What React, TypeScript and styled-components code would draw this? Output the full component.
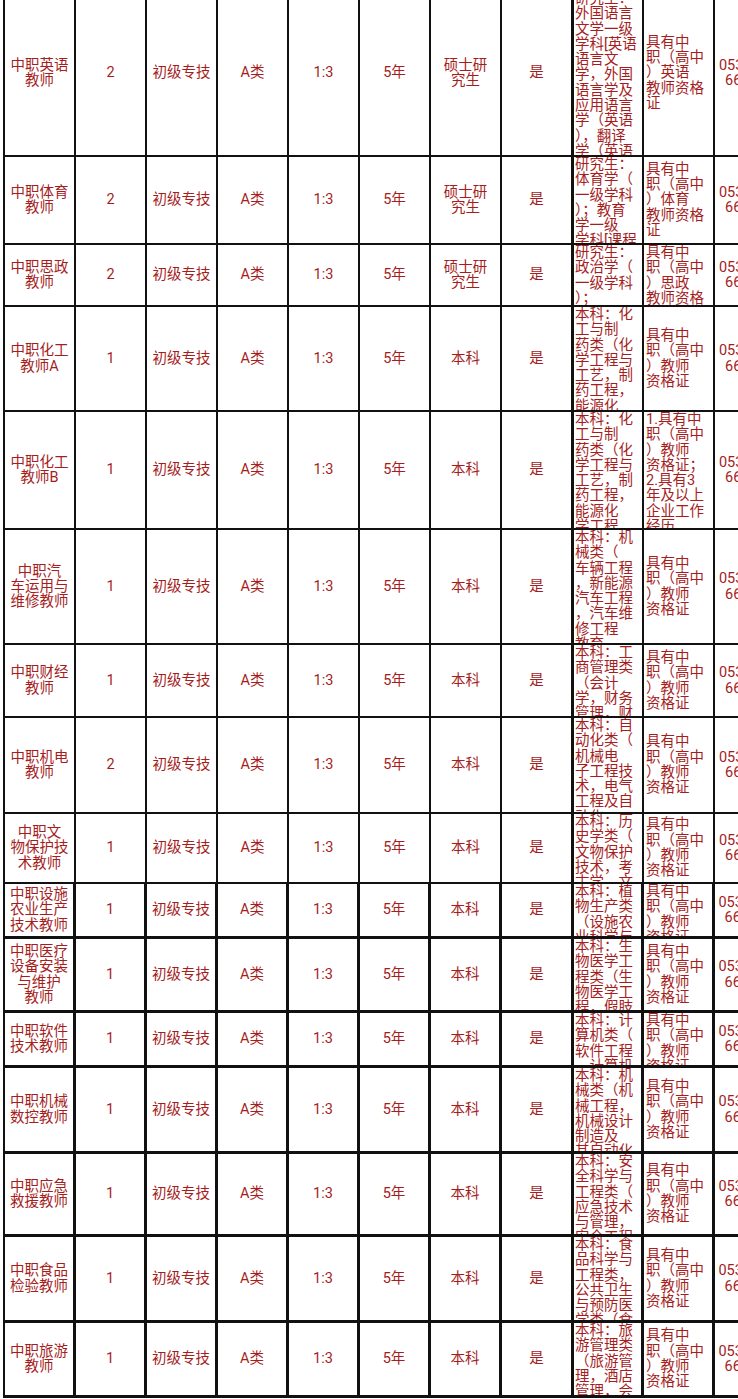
import React from 'react';
import styled, { createGlobalStyle } from 'styled-components';

const GlobalStyle = createGlobalStyle`
  html, body {
    margin: 0;
    padding: 0;
    background: #fff;
    overflow: hidden;
  }
  body {
    font-family: Roboto, "Noto Sans CJK SC", "Noto Sans", sans-serif;
    color: #a51d1d;
  }
`;

const Sheet = styled.div`
  width: 738px;
  height: 1399px;
  overflow: hidden;
  padding-left: 3px;
  box-sizing: border-box;
`;

const Table = styled.div`
  width: 787px;
  margin-top: -9px;
  border-left: 2px solid #111;
`;

const Row = styled.div<{ $h: number; $heavy?: boolean }>`
  display: grid;
  grid-template-columns: 71px 71px 71px 71px 71px 71px 71px 72px 70px 71px 71px;
  height: ${(p) => p.$h}px;
  border-bottom: ${(p) => (p.$heavy ? 3 : 2)}px solid #111;
  box-sizing: border-box;
`;

const Cell = styled.div<{ $align?: 'left' | 'center'; $heavy?: boolean; $pad?: number }>`
  display: flex;
  flex-direction: column;
  overflow: hidden;
  box-sizing: border-box;
  border-right: ${(p) => (p.$heavy ? 3 : 2)}px solid #111;
  padding: 0 ${(p) => p.$pad ?? 2}px;
  text-align: ${(p) => p.$align ?? 'center'};
  font-size: 14.5px;
  line-height: 15.3px;
`;

const Lines = styled.div`
  margin: auto 0;
  white-space: nowrap;
`;

const Line = styled.div``;

type Entry = {
  h: number;
  name: string[];
  n: string;
  edu: string[];
  major: string[];
  cert: string[];
  heavy?: boolean;
};

const std = ['具有中', '职（高中', '）教师', '资格证'];

const rows: Entry[] = [
  {
    h: 166,
    name: ['中职英语', '教师'],
    n: '2',
    edu: ['硕士研', '究生'],
    major: ['研究生：', '外国语言', '文学一级', '学科[英语', '语言文', '学，外国', '语言学及', '应用语言', '学（英语', '），翻译', '学（英语', '）'],
    cert: ['具有中', '职（高中', '）英语', '教师资格', '证'],
  },
  {
    h: 88,
    name: ['中职体育', '教师'],
    n: '2',
    edu: ['硕士研', '究生'],
    major: ['研究生：', '体育学（', '一级学科', '）；教育', '学一级', '学科[课程', '与教学论'],
    cert: ['具有中', '职（高中', '）体育', '教师资格', '证'],
  },
  {
    h: 62,
    name: ['中职思政', '教师'],
    n: '2',
    edu: ['硕士研', '究生'],
    major: ['研究生：', '政治学（', '一级学科', '）；', '马克思主'],
    cert: ['具有中', '职（高中', '）思政', '教师资格', '证'],
  },
  {
    h: 105,
    name: ['中职化工', '教师A'],
    n: '1',
    edu: ['本科'],
    major: ['本科：化', '工与制', '药类（化', '学工程与', '工艺，制', '药工程，', '能源化', '学工程'],
    cert: std,
  },
  {
    h: 118,
    name: ['中职化工', '教师B'],
    n: '1',
    edu: ['本科'],
    major: ['本科：化', '工与制', '药类（化', '学工程与', '工艺，制', '药工程，', '能源化', '学工程', '与工艺'],
    cert: ['1.具有中', '职（高中', '）教师', '资格证；', '2.具有3', '年及以上', '企业工作', '经历。'],
  },
  {
    h: 115,
    name: ['中职汽', '车运用与', '维修教师'],
    n: '1',
    edu: ['本科'],
    major: ['本科：机', '械类（', '车辆工程', '，新能源', '汽车工程', '，汽车维', '修工程', '教育'],
    cert: std,
  },
  {
    h: 73,
    name: ['中职财经', '教师'],
    n: '1',
    edu: ['本科'],
    major: ['本科：工', '商管理类', '（会计', '学，财务', '管理，财'],
    cert: std,
  },
  {
    h: 96,
    name: ['中职机电', '教师'],
    n: '2',
    edu: ['本科'],
    major: ['本科：自', '动化类（', '机械电', '子工程技', '术，电气', '工程及自', '动化'],
    cert: std,
  },
  {
    h: 70,
    name: ['中职文', '物保护技', '术教师'],
    n: '1',
    edu: ['本科'],
    major: ['本科：历', '史学类（', '文物保护', '技术，考', '古学，文'],
    cert: std,
  },
  {
    h: 55,
    name: ['中职设施', '农业生产', '技术教师'],
    n: '1',
    edu: ['本科'],
    major: ['本科：植', '物生产类', '（设施农', '业科学与'],
    cert: std,
    heavy: true,
  },
  {
    h: 74,
    name: ['中职医疗', '设备安装', '与维护', '教师'],
    n: '1',
    edu: ['本科'],
    major: ['本科：生', '物医学工', '程类（生', '物医学工', '程，假肢'],
    cert: std,
    heavy: true,
  },
  {
    h: 55,
    name: ['中职软件', '技术教师'],
    n: '1',
    edu: ['本科'],
    major: ['本科：计', '算机类（', '软件工程', '，计算机'],
    cert: std,
    heavy: true,
  },
  {
    h: 86,
    name: ['中职机械', '数控教师'],
    n: '1',
    edu: ['本科'],
    major: ['本科：机', '械类（机', '械工程，', '机械设计', '制造及', '其自动化'],
    cert: std,
    heavy: true,
  },
  {
    h: 83,
    name: ['中职应急', '救援教师'],
    n: '1',
    edu: ['本科'],
    major: ['本科：安', '全科学与', '工程类（', '应急技术', '与管理，', '安全工程'],
    cert: std,
    heavy: true,
  },
  {
    h: 86,
    name: ['中职食品', '检验教师'],
    n: '1',
    edu: ['本科'],
    major: ['本科：食', '品科学与', '工程类，', '公共卫生', '与预防医', '学类（食'],
    cert: std,
    heavy: true,
  },
  {
    h: 75,
    name: ['中职旅游', '教师'],
    n: '1',
    edu: ['本科'],
    major: ['本科：旅', '游管理类', '（旅游管', '理，酒店', '管理，会'],
    cert: std,
    heavy: true,
  },
];

const TextCell = ({
  lines,
  align,
  heavy,
  pad,
}: {
  lines: string[];
  align?: 'left' | 'center';
  heavy?: boolean;
  pad?: number;
}) => (
  <Cell $align={align} $heavy={heavy} $pad={pad}>
    <Lines>
      {lines.map((l, i) => (
        <Line key={i}>{l}</Line>
      ))}
    </Lines>
  </Cell>
);

export default function App() {
  return (
    <>
      <GlobalStyle />
      <Sheet>
        <Table>
          {rows.map((r, i) => (
            <Row key={i} $h={r.h} $heavy={r.heavy}>
              <TextCell lines={r.name} heavy={r.heavy} pad={0} />
              <TextCell lines={[r.n]} heavy={r.heavy} />
              <TextCell lines={['初级专技']} heavy={r.heavy} />
              <TextCell lines={['A类']} heavy={r.heavy} />
              <TextCell lines={['1:3']} heavy={r.heavy} />
              <TextCell lines={['5年']} heavy={r.heavy} />
              <TextCell lines={r.edu} heavy={r.heavy} />
              <TextCell lines={['是']} heavy />
              <TextCell lines={r.major} align="left" heavy={r.heavy} pad={1} />
              <TextCell lines={r.cert} align="left" heavy={r.heavy} pad={2} />
              <TextCell lines={['0535-663', '666213']} heavy={r.heavy} />
            </Row>
          ))}
        </Table>
      </Sheet>
    </>
  );
}
